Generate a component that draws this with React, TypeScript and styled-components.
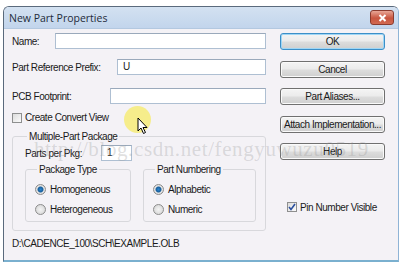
import * as React from 'react';
import styled, { createGlobalStyle } from 'styled-components';

const Global = createGlobalStyle`
  html, body { margin: 0; padding: 0; background: #ffffff; }
  body { font-family: "Liberation Sans", Arial, sans-serif; }
`;

const Page = styled.div`
  position: relative;
  width: 404px;
  height: 274px;
  padding: 6px 0 0 3px;
  box-sizing: border-box;
  overflow: hidden;
`;

const Window = styled.div`
  width: 396px;
  height: 256px;
  box-sizing: border-box;
  border: 1px solid #5a6a7c;
  border-right-color: #8fb4d6;
  border-bottom: 2px solid #7ab0cf;
  border-radius: 6px 6px 0 0;
  background: #f4f2f6;
  display: flex;
  flex-direction: column;
  overflow: hidden;
`;

const TitleBar = styled.div`
  height: 21px;
  flex: none;
  display: flex;
  align-items: center;
  justify-content: space-between;
  padding: 0 4px 0 5px;
  background: linear-gradient(#d3e1f1, #c2d5ec);
  border-bottom: 1px solid #b3c8e0;
  font-family: "Open Sans", "Liberation Sans", sans-serif;
  font-size: 10.5px;
  color: #1e2b3a;
`;

const CloseBtn = styled.div`
  width: 22px;
  height: 13px;
  border: 1px solid #8a3b2e;
  border-radius: 3px;
  background: linear-gradient(#e8a696, #c8553f 55%, #d26a52);
  display: flex;
  align-items: center;
  justify-content: center;
`;

const Body = styled.div`
  flex: 1;
  display: grid;
  grid-template-columns: 254px 1fr;
  padding: 2px 0 0 8px;
  font-size: 10px;
  color: #1a1a1a;
  letter-spacing: -0.45px;
`;

const LeftCol = styled.div`
  display: flex;
  flex-direction: column;
`;

const Row = styled.div<{ $h: number }>`
  height: ${({ $h }) => $h}px;
  display: flex;
  align-items: center;
`;

const Label = styled.span<{ $w: number }>`
  width: ${({ $w }) => $w}px;
  flex: none;
`;

const Input = styled.div<{ $w?: number }>`
  height: 16px;
  box-sizing: border-box;
  ${({ $w }) => ($w ? `width: ${$w}px;` : 'flex: 1;')}
  background: #fff;
  border: 1px solid #aebfd2;
  border-top-color: #9aa9bb;
  padding: 1px 5px;
  font-size: 10px;
  line-height: 12px;
`;

const Check = styled.span`
  width: 8px;
  height: 8px;
  border: 1px solid #8e8f8f;
  background: linear-gradient(135deg, #dcdcdc, #fbfbfb);
  margin-right: 3px;
  flex: none;
  position: relative;
`;

const Group = styled.fieldset`
  margin: 5px 0 0;
  padding: 1px 9px 8px 12px;
  border: 1px solid #d8d8dc;
  border-radius: 3px;
  min-width: 0;
`;

const Legend = styled.legend`
  padding: 0 2px;
  margin-left: 2px;
`;

const SubGroups = styled.div`
  display: flex;
  gap: 12px;
  margin-top: 1px;
`;

const SubGroup = styled.fieldset<{ $w: number }>`
  width: ${({ $w }) => $w}px;
  box-sizing: border-box;
  margin: 0;
  padding: 8px 8px 6px 9px;
  border: 1px solid #d8d8dc;
  border-radius: 3px;
  display: flex;
  flex-direction: column;
  gap: 8px;
`;

const RadioRow = styled.div`
  display: flex;
  align-items: center;
  height: 12px;
`;

const Radio = styled.span<{ $on?: boolean }>`
  width: 9px;
  height: 9px;
  border-radius: 50%;
  border: 1px solid #8c8c8c;
  background: ${({ $on }) =>
    $on
      ? 'radial-gradient(circle, #2a86d3 0, #1a5f9a 2.5px, #e8e8e8 3.5px, #d4d4d4 5px)'
      : 'radial-gradient(circle, #f4f4f4, #d0d0d0)'};
  margin-right: 4px;
  flex: none;
`;

const Path = styled.div`
  margin-top: 7px;
  height: 12px;
  line-height: 12px;
`;

const RightCol = styled.div`
  display: flex;
  flex-direction: column;
  padding: 2px 10px 0 14px;
`;

const Button = styled.div<{ $focus?: boolean }>`
  height: 17px;
  width: 105px;
  box-sizing: border-box;
  margin-bottom: 10.5px;
  border: 1px solid ${({ $focus }) => ($focus ? '#3c8fc8' : '#707070')};
  border-radius: 3px;
  background: linear-gradient(#f4f4f4 0, #ebebeb 48%, #dddddd 52%, #cfcfcf 100%);
  box-shadow: ${({ $focus }) => ($focus ? 'inset 0 0 0 1px #9fd6f5' : 'inset 0 0 0 1px #fafafa')};
  display: flex;
  align-items: center;
  justify-content: center;
  font-size: 10px;
`;

const PinRow = styled.div`
  display: flex;
  align-items: center;
  margin: 31px 0 0 7px;
`;

const Watermark = styled.div`
  position: absolute;
  left: 34px;
  top: 137px;
  font-family: "Liberation Serif", serif;
  font-size: 21px;
  letter-spacing: 0.6px;
  color: rgba(150, 150, 150, 0.3);
  pointer-events: none;
  white-space: nowrap;
`;

const Spot = styled.div`
  position: absolute;
  left: 124px;
  top: 106px;
  width: 27px;
  height: 27px;
  border-radius: 50%;
  background: rgba(246, 236, 120, 0.85);
`;

const Cursor = styled.svg`
  position: absolute;
  left: 137px;
  top: 117px;
`;

const Tick = () => (
  <svg width="8" height="8" viewBox="0 0 8 8" style={{ position: 'absolute', left: 0, top: 0 }}>
    <path d="M1 4 L3 6.5 L7 1" fill="none" stroke="#2b4f9e" strokeWidth="1.6" />
  </svg>
);

export default function App() {
  return (
    <>
      <Global />
      <Page>
        <Window>
          <TitleBar>
            <span>New Part Properties</span>
            <CloseBtn>
              <svg width="9" height="8" viewBox="0 0 9 8">
                <path d="M1.5 1 L7.5 7 M7.5 1 L1.5 7" stroke="#fff" strokeWidth="2" />
              </svg>
            </CloseBtn>
          </TitleBar>
          <Body>
            <LeftCol>
              <Row $h={20}>
                <Label $w={43}>Name:</Label>
                <Input />
              </Row>
              <Row $h={32}>
                <Label $w={105}>Part Reference Prefix:</Label>
                <Input>U</Input>
              </Row>
              <Row $h={26}>
                <Label $w={98}>PCB Footprint:</Label>
                <Input />
              </Row>
              <Row $h={17}>
                <Check />
                <span>Create Convert View</span>
              </Row>
              <Group>
                <Legend>Multiple-Part Package</Legend>
                <Row $h={20}>
                  <Label $w={76}>Parts per Pkg:</Label>
                  <Input $w={31}>1</Input>
                </Row>
                <SubGroups>
                  <SubGroup $w={106}>
                    <Legend>Package Type</Legend>
                    <RadioRow>
                      <Radio $on />
                      Homogeneous
                    </RadioRow>
                    <RadioRow>
                      <Radio />
                      Heterogeneous
                    </RadioRow>
                  </SubGroup>
                  <SubGroup $w={113}>
                    <Legend>Part Numbering</Legend>
                    <RadioRow>
                      <Radio $on />
                      Alphabetic
                    </RadioRow>
                    <RadioRow>
                      <Radio />
                      Numeric
                    </RadioRow>
                  </SubGroup>
                </SubGroups>
              </Group>
              <Path>D:\CADENCE_100\SCH\EXAMPLE.OLB</Path>
            </LeftCol>
            <RightCol>
              <Button $focus>OK</Button>
              <Button>Cancel</Button>
              <Button>Part Aliases...</Button>
              <Button>Attach Implementation...</Button>
              <Button>Help</Button>
              <PinRow>
                <Check>
                  <Tick />
                </Check>
                <span>Pin Number Visible</span>
              </PinRow>
            </RightCol>
          </Body>
        </Window>
        <Spot />
        <Cursor width="12" height="18" viewBox="0 0 12 18">
          <path d="M1 1 L1 14 L4 11 L6.5 16.5 L8.5 15.5 L6 10.5 L10 10.5 Z" fill="#fff" stroke="#000" strokeWidth="1" />
        </Cursor>
        <Watermark>http://blog.csdn.net/fengyuwuzu0519</Watermark>
      </Page>
    </>
  );
}
